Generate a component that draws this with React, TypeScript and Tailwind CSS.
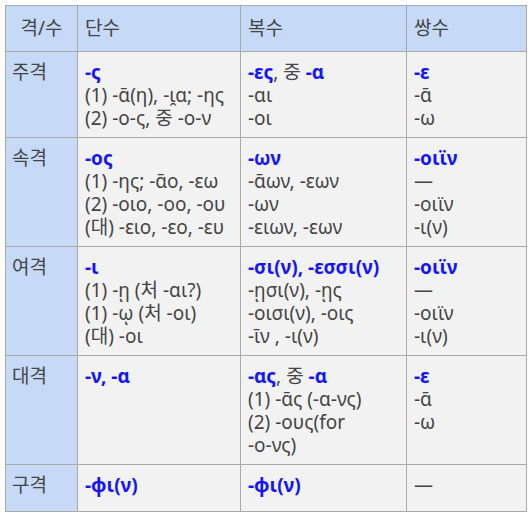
const F = { fontFamily: '"Noto Sans", "Noto Sans CJK KR", sans-serif' };

function B({ children }: { children: React.ReactNode }) {
  return <b className="font-bold text-[#1414ff]">{children}</b>;
}

type Row = { name: string; sg: React.ReactNode[]; pl: React.ReactNode[]; du: React.ReactNode[] };

const ROWS: Row[] = [
  {
    name: "주격",
    sg: [<B>-ς</B>, "(1) -ᾱ(η), -ι̯α; -ης", "(2) -ο-ς, 중 -ο-ν"],
    pl: [<><B>-ες</B>, 중 <B>-α</B></>, "-αι", "-οι"],
    du: [<B>-ε</B>, "-ᾱ", "-ω"],
  },
  {
    name: "속격",
    sg: [<B>-ος</B>, "(1) -ης; -ᾱο, -εω", "(2) -οιο, -οο, -ου", "(대) -ειο, -εο, -ευ"],
    pl: [<B>-ων</B>, "-ᾱων, -εων", "-ων", "-ειων, -εων"],
    du: [<B>-οιϊν</B>, "—", "-οιϊν", "-ι(ν)"],
  },
  {
    name: "여격",
    sg: [<B>-ι</B>, "(1) -ῃ (처 -αι?)", "(1) -ῳ (처 -οι)", "(대) -οι"],
    pl: [<B>-σι(ν), -εσσι(ν)</B>, "-ῃσι(ν), -ῃς", "-οισι(ν), -οις", "-ῑν , -ι(ν)"],
    du: [<B>-οιϊν</B>, "—", "-οιϊν", "-ι(ν)"],
  },
  {
    name: "대격",
    sg: [<B>-ν, -α</B>],
    pl: [<><B>-ας</B>, 중 <B>-α</B></>, "(1) -ᾱς (-α-νς)", "(2) -ους(for", "-ο-νς)"],
    du: [<B>-ε</B>, "-ᾱ", "-ω"],
  },
  {
    name: "구격",
    sg: [<B>-φι(ν)</B>],
    pl: [<B>-φι(ν)</B>],
    du: ["—"],
  },
];

function Cell({ lines }: { lines: React.ReactNode[] }) {
  return (
    <td className="border border-[#aaaaaa] bg-[#f2f2f2] px-[7px] pt-[9px] pb-[7px] align-top whitespace-nowrap">
      {lines.map((l, i) => (
        <div key={i}>{l}</div>
      ))}
    </td>
  );
}

export default function App() {
  return (
    <div className="bg-white w-[531px] h-[518px] pt-[5px] pl-[5px]" style={F}>
      <table className="table-fixed w-[521px] border-collapse text-[19px] leading-[23px] text-[#444444]">
        <thead>
          <tr className="h-[46px]">
            <th className="w-[72px] border border-[#aaaaaa] bg-[#c6d9f7] font-normal text-center px-[7px]">격/수</th>
            <th className="w-[163px] border border-[#aaaaaa] bg-[#c6d9f7] font-normal text-left px-[7px]">단수</th>
            <th className="w-[166px] border border-[#aaaaaa] bg-[#c6d9f7] font-normal text-left px-[7px]">복수</th>
            <th className="w-[120px] border border-[#aaaaaa] bg-[#c6d9f7] font-normal text-left px-[7px]">쌍수</th>
          </tr>
        </thead>
        <tbody>
          {ROWS.map((r) => (
            <tr key={r.name} className={r.name === "구격" ? "h-[47px]" : ""}>
              <th className="border border-[#aaaaaa] bg-[#c6d9f7] font-normal text-left align-top px-[6px] pt-[9px] pb-[7px]">
                {r.name}
              </th>
              <Cell lines={r.sg} />
              <Cell lines={r.pl} />
              <Cell lines={r.du} />
            </tr>
          ))}
        </tbody>
      </table>
    </div>
  );
}
